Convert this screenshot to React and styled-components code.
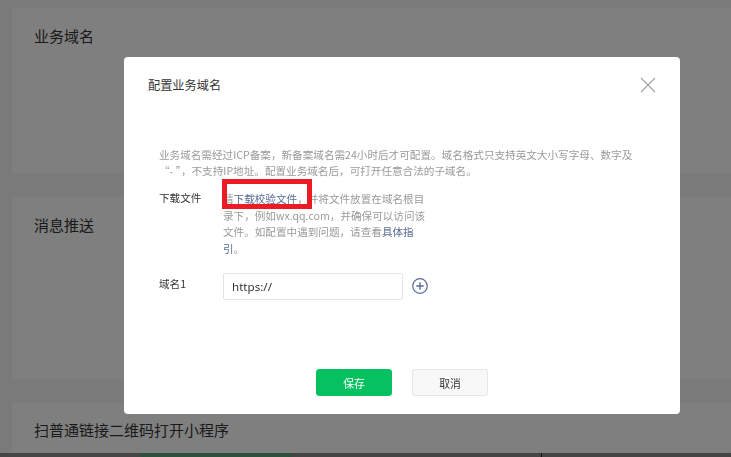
import React from "react";
import styled, { createGlobalStyle } from "styled-components";

const GlobalStyle = createGlobalStyle`
  html, body { margin: 0; padding: 0; }
  body {
    background: #f4f4f4;
    font-family: "Noto Sans CJK SC", "Noto Sans", sans-serif;
    overflow: hidden;
  }
`;

const Page = styled.div`
  height: 100vh;
  display: flex;
  flex-direction: column;
  overflow: hidden;
`;

const Content = styled.div`
  padding: 8px 0 0 12px;
  display: flex;
  flex-direction: column;
  gap: 23px;
`;

const Card = styled.section`
  background: #ffffff;
  border-radius: 2px;
  height: ${(p) => p.$h}px;
  padding: 18px 22px;
  box-sizing: border-box;
  flex-shrink: 0;
`;

const CardTitle = styled.h2`
  margin: 0;
  font-size: 15px;
  line-height: 20px;
  font-weight: 400;
  color: #353535;
`;

const Strip = styled.div`
  display: flex;
  height: 20px;
  flex-shrink: 0;
  background: #8a8a8a;
`;

const StripSeg = styled.div`
  width: ${(p) => p.$w}px;
  background: ${(p) => p.$c};
  border-right: ${(p) => (p.$line ? "1px solid #222" : "none")};
`;

const Overlay = styled.div`
  position: fixed;
  inset: 0;
  background: rgba(0, 0, 0, 0.5);
  display: flex;
  align-items: flex-start;
  padding: 57px 0 0 124px;
`;

const Dialog = styled.div`
  width: 556px;
  height: 357px;
  background: #ffffff;
  border-radius: 4px;
  display: flex;
  flex-direction: column;
  box-sizing: border-box;
`;

const Header = styled.div`
  display: flex;
  justify-content: space-between;
  align-items: center;
  padding: 20px 24px 0 24px;
  height: 16px;
  box-sizing: content-box;
`;

const DialogTitle = styled.h3`
  margin: 0;
  font-size: 12.2px;
  line-height: 16px;
  font-weight: 400;
  color: #353535;
`;

const CloseButton = styled.button`
  border: 0;
  background: transparent;
  padding: 0;
  width: 16px;
  height: 16px;
  display: flex;
  cursor: pointer;
`;

const Body = styled.div`
  padding: 54px 36px 0 35px;
  font-size: 10.6px;
`;

const Desc = styled.p`
  margin: 0;
  color: #9a9a9a;
  line-height: 16px;
`;

const Row = styled.div`
  display: flex;
  align-items: flex-start;
  margin-top: ${(p) => p.$mt}px;
`;

const Label = styled.div`
  width: 64px;
  flex-shrink: 0;
  color: #353535;
  line-height: 17px;
  padding-top: ${(p) => p.$pt || 0}px;
`;

const Value = styled.div`
  position: relative;
  width: 206px;
  color: #9a9a9a;
  line-height: 16.5px;
  padding-top: 2px;
`;

const Link = styled.a`
  color: #576b95;
  text-decoration: none;
`;

const Highlight = styled.div`
  position: absolute;
  left: -1px;
  top: -10px;
  width: 90px;
  height: 30px;
  border: 5px solid #ec1c24;
  box-sizing: border-box;
  pointer-events: none;
`;

const Input = styled.input`
  width: 180px;
  height: 27px;
  box-sizing: border-box;
  border: 1px solid #e4e4e4;
  border-radius: 2px;
  padding: 0 8px;
  font-family: "Noto Sans", "Noto Sans CJK SC", sans-serif;
  font-size: 11.6px;
  color: #353535;
  outline: none;
`;

const AddButton = styled.button`
  border: 0;
  background: transparent;
  padding: 0;
  margin: 5px 0 0 9px;
  width: 16px;
  height: 16px;
  display: flex;
  cursor: pointer;
`;

const Footer = styled.div`
  margin-top: auto;
  padding-bottom: 18px;
  display: flex;
  justify-content: center;
  gap: 20px;
`;

const Button = styled.button`
  width: 76px;
  height: 27px;
  border-radius: 3px;
  font-family: "Noto Sans CJK SC", sans-serif;
  font-size: 10.8px;
  cursor: pointer;
  border: 1px solid ${(p) => (p.$primary ? "#07c160" : "#e6e6e6")};
  background: ${(p) => (p.$primary ? "#07c160" : "#f8f8f8")};
  color: ${(p) => (p.$primary ? "#ffffff" : "#353535")};
`;

export default function App() {
  return (
    <>
      <GlobalStyle />
      <Page>
        <Content>
          <Card $h={166}>
            <CardTitle>业务域名</CardTitle>
          </Card>
          <Card $h={182}>
            <CardTitle>消息推送</CardTitle>
          </Card>
          <Card $h={51}>
            <CardTitle>扫普通链接二维码打开小程序</CardTitle>
          </Card>
        </Content>
        <Strip>
          <StripSeg $w={141} $c="#8c8c8c" />
          <StripSeg $w={151} $c="#5aa078" />
          <StripSeg $w={249} $c="#8a8a8a" $line />
        </Strip>
      </Page>
      <Overlay>
        <Dialog>
          <Header>
            <DialogTitle>配置业务域名</DialogTitle>
            <CloseButton aria-label="关闭">
              <svg width="16" height="16" viewBox="0 0 16 16">
                <path d="M1 1 L15 15 M15 1 L1 15" stroke="#a3a3a3" strokeWidth="1.1" fill="none" />
              </svg>
            </CloseButton>
          </Header>
          <Body>
            <Desc>
              业务域名需经过ICP备案，新备案域名需24小时后才可配置。域名格式只支持英文大小写字母、数字及
              <br />
              “- ”，不支持IP地址。配置业务域名后，可打开任意合法的子域名。
            </Desc>
            <Row $mt={10}>
              <Label>下载文件</Label>
              <Value>
                请<Link href="#">下载校验文件</Link>，并将文件放置在域名根目录下，例如wx.qq.com，并确保可以访问该文件。如配置中遇到问题，请查看
                <Link href="#">具体指引</Link>。
                <Highlight />
              </Value>
            </Row>
            <Row $mt={16}>
              <Label $pt={2}>域名1</Label>
              <Input defaultValue="https://" />
              <AddButton aria-label="添加">
                <svg width="16" height="16" viewBox="0 0 16 16">
                  <circle cx="8" cy="8" r="7.3" stroke="#56679a" strokeWidth="1.2" fill="none" />
                  <path d="M8 4.3 V11.7 M4.3 8 H11.7" stroke="#56679a" strokeWidth="1.3" />
                </svg>
              </AddButton>
            </Row>
          </Body>
          <Footer>
            <Button $primary>保存</Button>
            <Button>取消</Button>
          </Footer>
        </Dialog>
      </Overlay>
    </>
  );
}
